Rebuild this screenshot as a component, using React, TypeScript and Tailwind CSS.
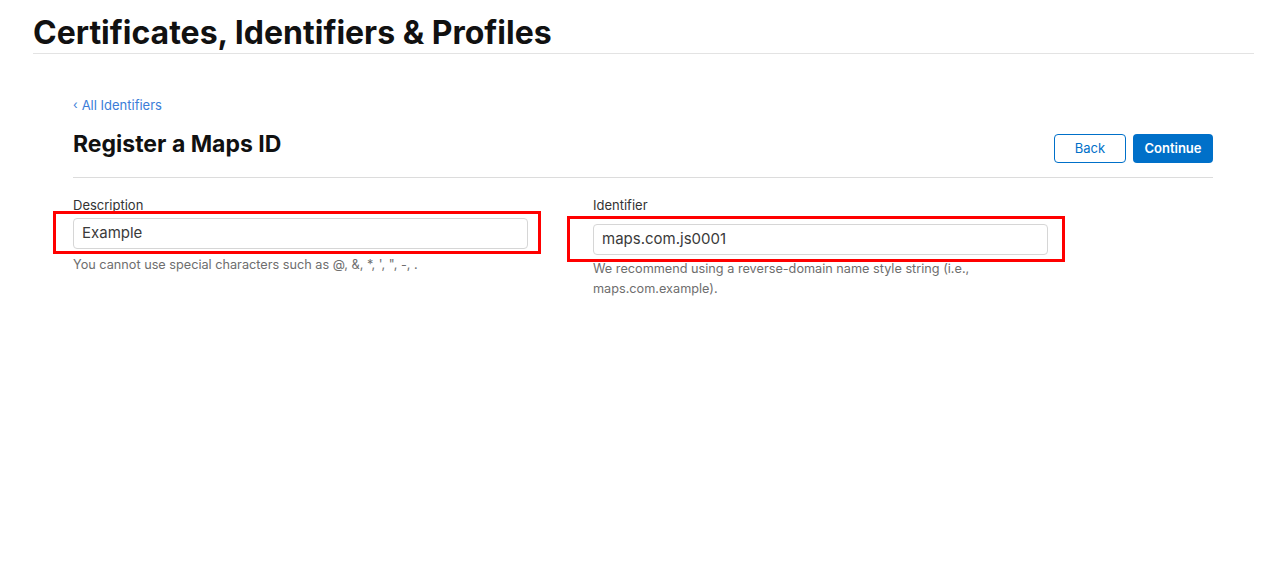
import React from "react";

export default function App() {
  return (
    <div className="min-h-[585px] bg-white text-[#111]" style={{ fontFamily: "Inter, 'Noto Sans', sans-serif" }}>
      <div className="px-[33px] pt-[13px]">
        <h1 className="border-b border-[#e3e3e3] text-[32px] font-bold leading-[40px] text-[#111]">
          Certificates, Identifiers &amp; Profiles
        </h1>
      </div>
      <div className="ml-[73px] w-[1140px] pt-[42px]">
        <a className="flex items-center gap-[4px] text-[13px] leading-[18px] text-[#3b7dd8]">
          <span className="text-[12px]">‹</span>
          <span>All Identifiers</span>
        </a>
        <div className="mt-[11px] flex items-start justify-between border-b border-[#dcdcdc] pb-[14px]">
          <h2 className="pt-[5px] text-[23px] font-bold leading-[28px] text-[#111]">Register a Maps ID</h2>
          <div className="flex gap-[7px] pt-[9px]">
            <button className="h-[29px] w-[72px] rounded-[4px] border border-[#0070c9] bg-white text-[13px] text-[#0070c9]">
              Back
            </button>
            <button className="h-[29px] w-[80px] rounded-[4px] bg-[#0070c9] text-[13px] font-semibold text-white">
              Continue
            </button>
          </div>
        </div>
        <div className="flex pt-[19px]">
          <div className="w-[520px]">
            <label className="block text-[13px] leading-[16px] text-[#333]">Description</label>
            <div className="relative mt-[5px] w-[455px]">
              <div className="absolute left-[-20px] right-[-13px] top-[-7px] bottom-[-5px] border-[3px] border-[#ff0000]" />
              <div className="relative flex h-[31px] items-center rounded-[4px] border border-[#d6d6d6] bg-white px-[8px] text-[15px] text-[#3a3a3a]">
                Example
              </div>
            </div>
            <p className="mt-[6px] text-[12.7px] leading-[20px] text-[#6e6e6e]">
              You cannot use special characters such as @, &amp;, *, ', ", -, .
            </p>
          </div>
          <div className="w-[455px]">
            <label className="block text-[13px] leading-[16px] text-[#333]">Identifier</label>
            <div className="relative mt-[11px] w-[455px]">
              <div className="absolute left-[-26px] right-[-17px] top-[-8px] bottom-[-7px] border-[3px] border-[#ff0000]" />
              <div className="relative flex h-[31px] items-center rounded-[4px] border border-[#d6d6d6] bg-white px-[8px] text-[15px] text-[#3a3a3a]">
                maps.com.js0001
              </div>
            </div>
            <p className="mt-[4px] text-[12.7px] leading-[20px] text-[#6e6e6e]">
              We recommend using a reverse-domain name style string (i.e.,
              <br />
              maps.com.example).
            </p>
          </div>
        </div>
      </div>
    </div>
  );
}
